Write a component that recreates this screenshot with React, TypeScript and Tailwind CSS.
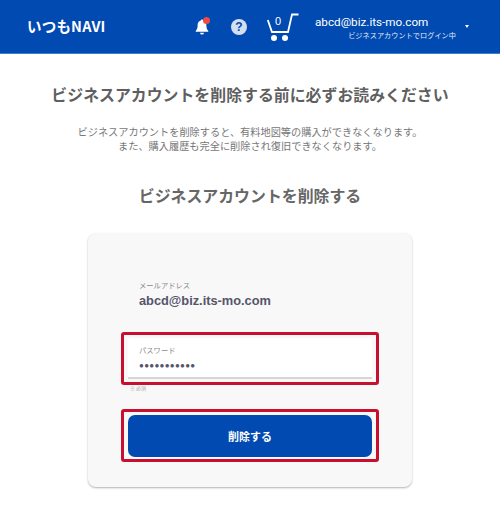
const jp = "font-['Noto_Sans_CJK_JP','Noto_Sans',sans-serif]"

function Bell() {
  return (
    <div className="relative w-[14px] h-[18px] mt-[1px]">
      <svg width="14" height="18" viewBox="0 0 16 20" fill="#fff">
        <path d="M8 1.500c.8 0 1.300.5 1.400 1.200C12 3.400 13 5.600 13 8c0 3 .6 4.800 2.200 6.500v1H.8v-1C2.400 12.800 3 11 3 8c0-2.400 1-4.600 3.600-5.300C6.700 2 7.200 1.500 8 1.500z" />
        <path d="M5.800 16.500h4.400a2.200 2.200 0 0 1-4.400 0z" />
      </svg>
      <span className="absolute right-[-1px] top-[-1px] w-[7px] h-[7px] rounded-full bg-[#ee4b45]" />
    </div>
  )
}

function Cart() {
  return (
    <svg width="32" height="28" viewBox="0 0 32 28" fill="none">
      <path d="M.8 7L5 19h16l4-17.500h6.500" stroke="#fff" strokeWidth="1.800" />
      <circle cx="7" cy="25" r="3" fill="#fff" />
      <circle cx="18" cy="25" r="3" fill="#fff" />
    </svg>
  )
}

export default function App() {
  return (
    <div className={`w-[500px] h-[520px] bg-white overflow-hidden ${jp}`}>
      <header className="h-[54px] bg-[#004ab1] flex items-center pl-[27px] border-b border-[#3f7fd0]">
        <div className="w-[168px] text-white text-[14.500px] font-bold leading-none tracking-[0.2px]">いつもNAVI</div>
        <Bell />
        <div className="ml-[22px] w-[16px] h-[16px] rounded-full bg-[#d5dff2] text-[#004ab1] flex items-center justify-center text-[12px] font-bold leading-none font-['Liberation_Sans',sans-serif]">?</div>
        <div className="ml-[20px] relative">
          <Cart />
          <span className="absolute left-[8px] top-[1px] text-white text-[11px] leading-[14px] font-['Liberation_Sans',sans-serif]">0</span>
        </div>
        <div className="ml-[16px] w-[141px] text-white flex flex-col items-end">
          <div className="self-start text-[11.700px] leading-[16px] font-['Roboto',sans-serif]">abcd@biz.its-mo.com</div>
          <div className="text-[7.200px] leading-[10px] text-[#e4ecf8]">ビジネスアカウントでログイン中</div>
        </div>
        <span className="ml-[9px] w-0 h-0 border-x-[2px] border-x-transparent border-t-[3px] border-t-white" />
      </header>

      <main className="flex flex-col items-center">
        <h1 className="mt-[31px] text-[15.900px] leading-[20px] font-bold text-[#5f5f5f] whitespace-nowrap">ビジネスアカウントを削除する前に必ずお読みください</h1>
        <p className="mt-[20px] text-[10.200px] leading-[14px] text-[#777] text-center">
          ビジネスアカウントを削除すると、有料地図等の購入ができなくなります。
          <br />
          また、購入履歴も完全に削除され復旧できなくなります。
        </p>
        <h2 className="mt-[33px] text-[15.900px] leading-[20px] font-bold text-[#666]">ビジネスアカウントを削除する</h2>

        <section className="mt-[27px] w-[324px] h-[254px] rounded-[8px] bg-[#f8f8f8] shadow-[0_1px_2px_rgba(0,0,0,0.3)] px-[33px] pt-[47px]">
          <div className="pl-[18px]">
            <div className="text-[7.300px] leading-[10px] text-[#8a8a8a]">メールアドレス</div>
            <div className="mt-[2px] text-[12.800px] leading-[18px] font-bold text-[#55556a] font-['Liberation_Sans',sans-serif]">abcd@biz.its-mo.com</div>
          </div>

          <div className="mt-[22px] h-[53px] border-[3px] border-[#c8102e] rounded-[3px] px-[4px] pt-[3px]">
            <div className="h-[41px] bg-white rounded-t-[3px] border-b-2 border-[#d8d6cf] pl-[11px] pt-[7px]">
              <div className="text-[7.300px] leading-[10px] text-[#8a8a8a]">パスワード</div>
              <div className="mt-[5px] text-[8px] leading-[12px] tracking-[0.300px] text-[#55556a] font-['Liberation_Sans',sans-serif]">●●●●●●●●●●●</div>
            </div>
          </div>
          <div className="pl-[9px] mt-[-1px] text-[5px] leading-[8px] text-[#aaa]">※ 必須</div>

          <div className="mt-[17px] h-[53px] border-[3px] border-[#c8102e] rounded-[3px] px-[4px] pt-[3px] pb-[2px]">
            <button className="w-full h-full rounded-[7px] bg-[#004ab1] text-white text-[11px] font-bold">削除する</button>
          </div>
        </section>
      </main>
    </div>
  )
}
